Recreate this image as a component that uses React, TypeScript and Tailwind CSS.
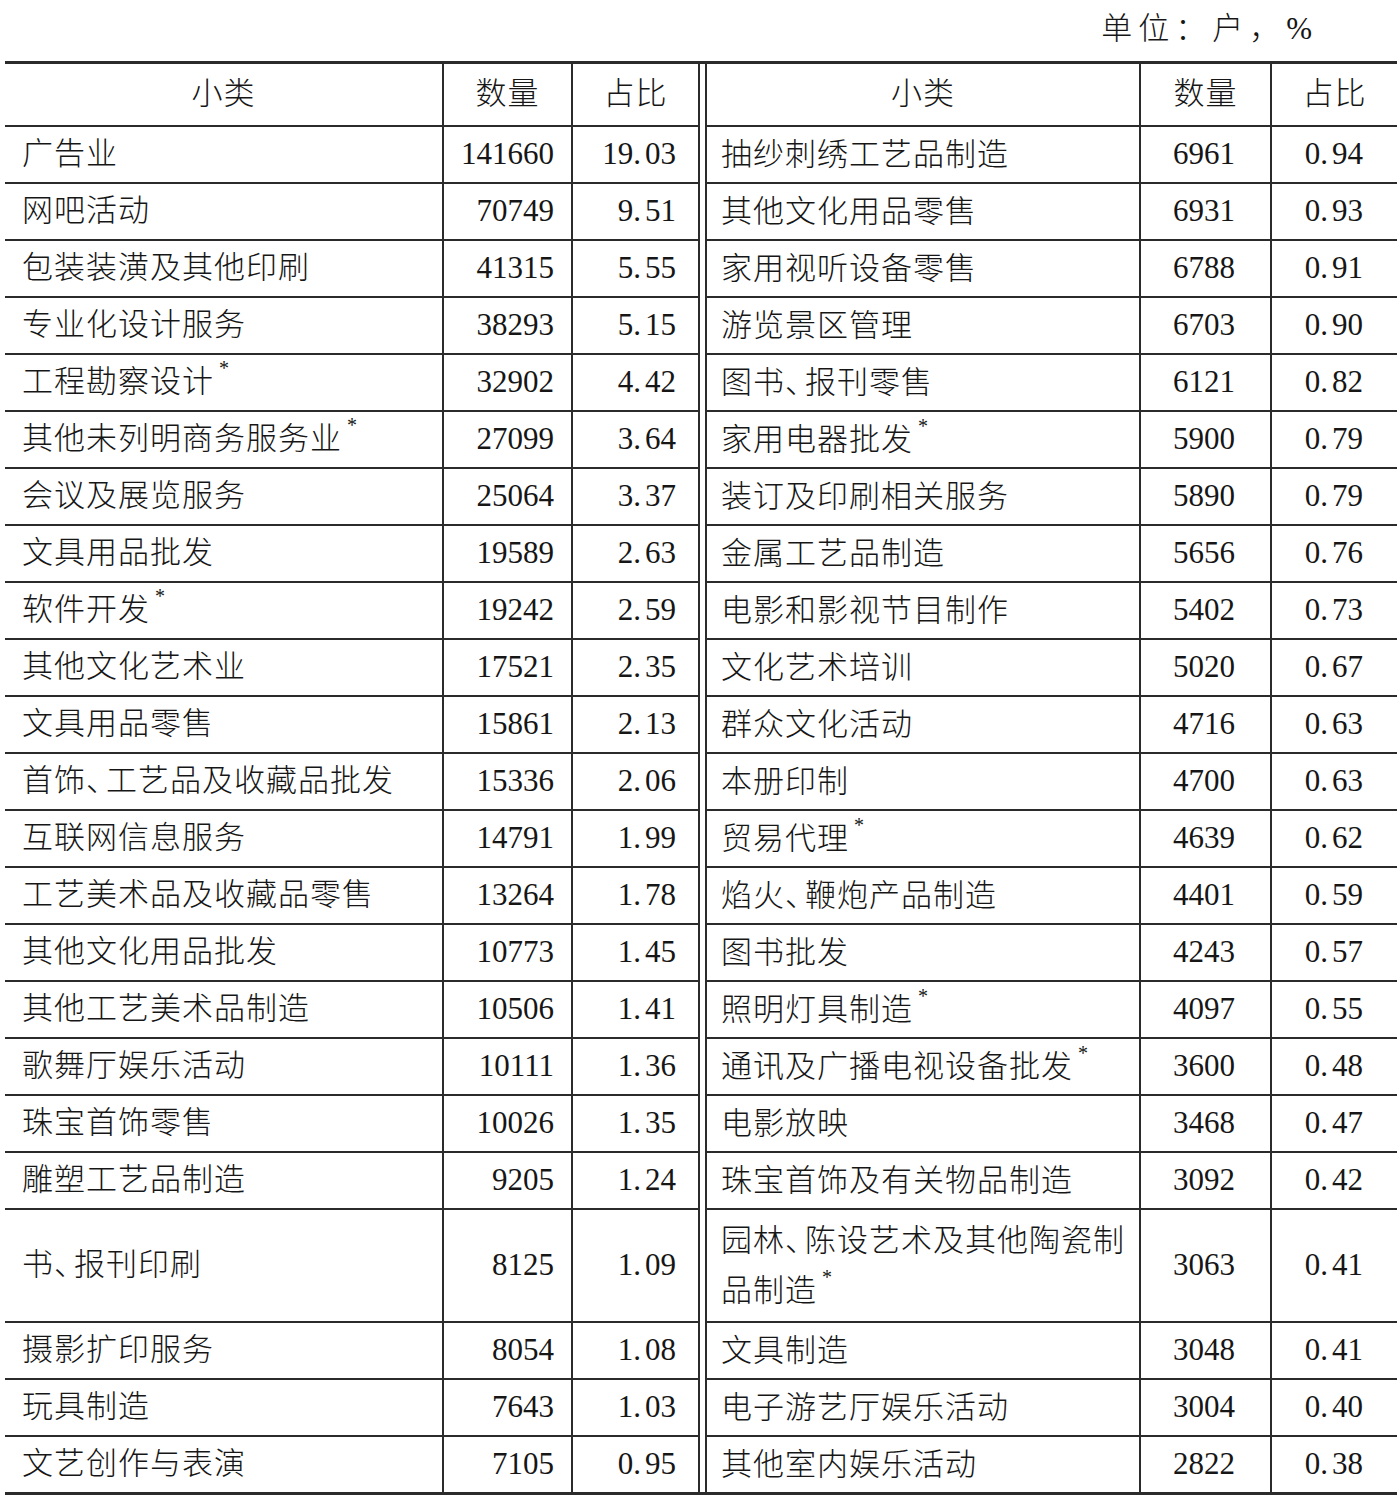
import React from "react";

type Item = [string, number, string];

const leftRows: Item[] = [
  ["广告业", 141660, "19.03"],
  ["网吧活动", 70749, "9.51"],
  ["包装装潢及其他印刷", 41315, "5.55"],
  ["专业化设计服务", 38293, "5.15"],
  ["工程勘察设计*", 32902, "4.42"],
  ["其他未列明商务服务业*", 27099, "3.64"],
  ["会议及展览服务", 25064, "3.37"],
  ["文具用品批发", 19589, "2.63"],
  ["软件开发*", 19242, "2.59"],
  ["其他文化艺术业", 17521, "2.35"],
  ["文具用品零售", 15861, "2.13"],
  ["首饰、工艺品及收藏品批发", 15336, "2.06"],
  ["互联网信息服务", 14791, "1.99"],
  ["工艺美术品及收藏品零售", 13264, "1.78"],
  ["其他文化用品批发", 10773, "1.45"],
  ["其他工艺美术品制造", 10506, "1.41"],
  ["歌舞厅娱乐活动", 10111, "1.36"],
  ["珠宝首饰零售", 10026, "1.35"],
  ["雕塑工艺品制造", 9205, "1.24"],
  ["书、报刊印刷", 8125, "1.09"],
  ["摄影扩印服务", 8054, "1.08"],
  ["玩具制造", 7643, "1.03"],
  ["文艺创作与表演", 7105, "0.95"],
];

const rightRows: Item[] = [
  ["抽纱刺绣工艺品制造", 6961, "0.94"],
  ["其他文化用品零售", 6931, "0.93"],
  ["家用视听设备零售", 6788, "0.91"],
  ["游览景区管理", 6703, "0.90"],
  ["图书、报刊零售", 6121, "0.82"],
  ["家用电器批发*", 5900, "0.79"],
  ["装订及印刷相关服务", 5890, "0.79"],
  ["金属工艺品制造", 5656, "0.76"],
  ["电影和影视节目制作", 5402, "0.73"],
  ["文化艺术培训", 5020, "0.67"],
  ["群众文化活动", 4716, "0.63"],
  ["本册印制", 4700, "0.63"],
  ["贸易代理*", 4639, "0.62"],
  ["焰火、鞭炮产品制造", 4401, "0.59"],
  ["图书批发", 4243, "0.57"],
  ["照明灯具制造*", 4097, "0.55"],
  ["通讯及广播电视设备批发*", 3600, "0.48"],
  ["电影放映", 3468, "0.47"],
  ["珠宝首饰及有关物品制造", 3092, "0.42"],
  ["园林、陈设艺术及其他陶瓷制品制造*", 3063, "0.41"],
  ["文具制造", 3048, "0.41"],
  ["电子游艺厅娱乐活动", 3004, "0.40"],
  ["其他室内娱乐活动", 2822, "0.38"],
];

const font = { fontFamily: '"Liberation Serif", "Noto Sans CJK SC", serif' };

function Name({ text }: { text: string }) {
  const star = text.endsWith("*");
  const base = star ? text.slice(0, -1) : text;
  const parts = base.split("、");
  return (
    <>
      {parts.map((p, i) => (
        <React.Fragment key={i}>
          {i > 0 && <span className="mr-[-12px]">、</span>}
          {p}
        </React.Fragment>
      ))}
      {star && <sup className="ml-[5px] text-[20px] align-[7px]">*</sup>}
    </>
  );
}

function Ratio({ v }: { v: string }) {
  const [a, b] = v.split(".");
  return (
    <span>
      {a}.<span className="ml-[4px]">{b}</span>
    </span>
  );
}

const cols = "grid grid-cols-[439px_129px_127px_7px_434px_131px_125px]";
const line = "border-[#2b2b2b]";

export default function App() {
  return (
    <div className="w-[1400px] h-[1500px] bg-white text-[#161616]" style={font}>
      {/* unit */}
      <div className="h-[58px] flex items-center justify-end pr-[82px] text-[31px] font-light tracking-[6px]">
        单位：户，%
      </div>

      <div className={`ml-[5px] w-[1392px] mt-[3px] border-t-[3px] border-b-[3px] ${line}`}>
        {/* header */}
        <div className={`${cols} h-[63px] text-[31px] font-light`}>
          <div className={`flex items-center justify-center border-r-2 border-b-2 ${line} tracking-[1px]`}>小类</div>
          <div className={`flex items-center justify-center border-r-2 border-b-2 ${line} tracking-[1px]`}>数量</div>
          <div className={`flex items-center justify-center border-r-2 border-b-2 ${line} tracking-[1px]`}>占比</div>
          <div className={`border-r-2 ${line}`} />
          <div className={`flex items-center justify-center border-r-2 border-b-2 ${line} tracking-[1px]`}>小类</div>
          <div className={`flex items-center justify-center border-r-2 border-b-2 ${line} tracking-[1px]`}>数量</div>
          <div className={`flex items-center justify-center border-b-2 ${line} tracking-[1px]`}>占比</div>
        </div>

        {leftRows.map((l, i) => {
          const r = rightRows[i];
          const last = i === leftRows.length - 1;
          const tall = i === 19;
          const h = last ? "h-[55px]" : tall ? "h-[113px]" : "h-[57px]";
          const b = last ? "" : "border-b-2";
          return (
            <div key={i} className={`${cols} ${h} text-[31px]`}>
              <div className={`flex items-center pl-[17px] font-light tracking-[1px] border-r-2 ${b} ${line}`}>
                <span><Name text={l[0]} /></span>
              </div>
              <div className={`flex items-center justify-end pr-[17px] border-r-2 ${b} ${line}`}>{l[1]}</div>
              <div className={`flex items-center justify-end pr-[22px] border-r-2 ${b} ${line}`}>
                <Ratio v={l[2]} />
              </div>
              <div className={`border-r-2 ${line}`} />
              <div className={`flex items-center pl-[14px] pr-[8px] font-light tracking-[1px] leading-[50px] border-r-2 ${b} ${line}`}>
                <span><Name text={r[0]} /></span>
              </div>
              <div className={`flex items-center justify-end pr-[35px] border-r-2 ${b} ${line}`}>{r[1]}</div>
              <div className={`flex items-center justify-end pr-[34px] ${b} ${line}`}>
                <Ratio v={r[2]} />
              </div>
            </div>
          );
        })}
      </div>
    </div>
  );
}
